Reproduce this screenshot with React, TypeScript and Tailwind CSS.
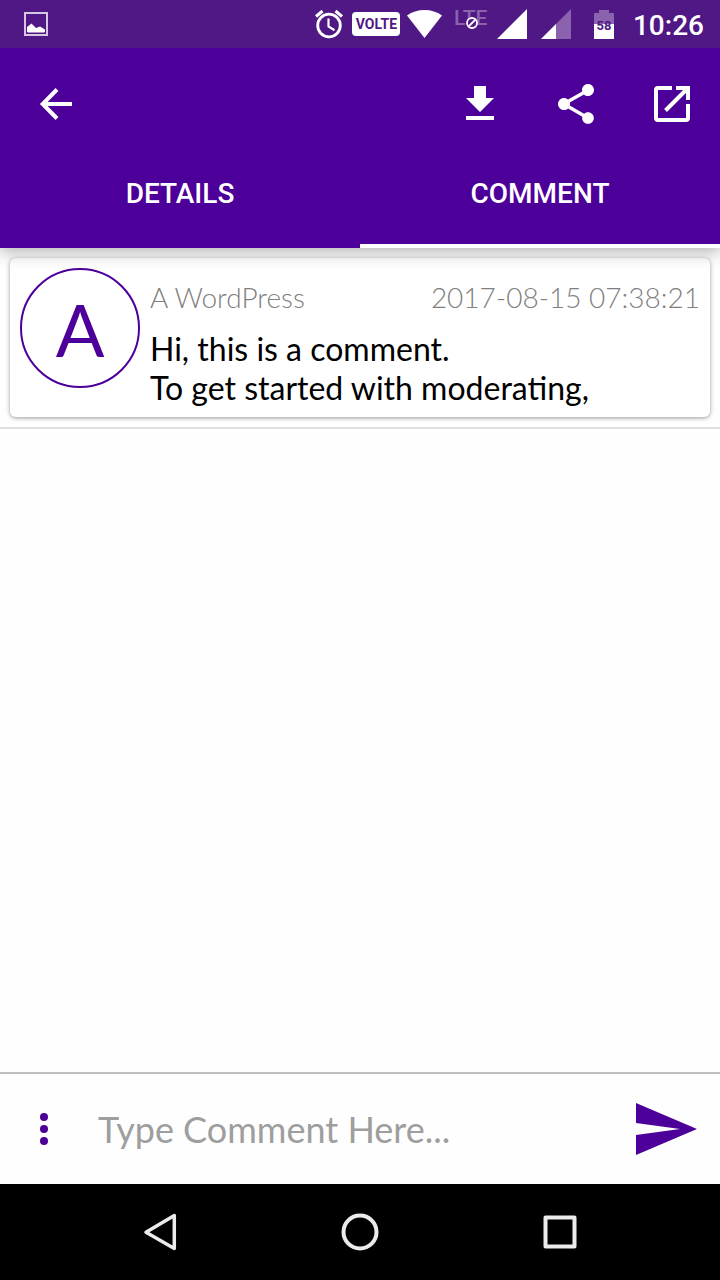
import { useState } from "react";

function StatusBar() {
  return (
    <div className="flex h-12 items-center justify-between bg-[#501884] pr-4 pl-6 text-white">
      <svg className="size-6" viewBox="0 0 24 24" aria-hidden="true">
        <rect x="1" y="1" width="22" height="22" fill="none" stroke="#d6c8e4" strokeWidth="2" />
        <path d="M3 20V15l4.500-3.500 4.500 4.500 4-1.500 5 3v2.500l-1 .5H4z" fill="#fff" />
      </svg>
      <div className="flex items-center">
        <svg className="h-8 w-7" viewBox="0 0 28 32" fill="none" stroke="#fff" aria-hidden="true">
          <circle cx="14" cy="17.500" r="11.300" strokeWidth="2.800" />
          <path d="M1 8.500 7.500 3M27 8.500 20.500 3" strokeWidth="3" />
          <path d="M13.500 10.500v8l6 3.700" strokeWidth="2.200" />
        </svg>
        <span className="ml-[9px] flex h-6 w-12 items-center justify-center rounded-sm bg-white pl-px font-['Roboto',sans-serif] text-[14px] font-bold text-[#501884]">
          VOLTE
        </span>
        <svg className="ml-[7px] h-7 w-[35px]" viewBox="0 0 35 28" fill="#fff" aria-hidden="true">
          <path d="M17.500 28 0 5.500Q7.500 0 17.500 0T35 5.500z" />
        </svg>
        <span className="relative ml-3 flex h-10 w-9 items-start font-['Roboto',sans-serif] text-[21px] leading-[28px] font-medium text-[#8a62ad]">
          LTE
          <svg className="absolute top-[13px] left-3 size-3" viewBox="0 0 12 12" fill="#501884" stroke="#fff" strokeWidth="1.800" aria-hidden="true">
            <circle cx="6" cy="6" r="5" />
            <path d="m3 9 6-6" />
          </svg>
        </span>
        <svg className="ml-[7px] size-[30px]" viewBox="0 0 30 30" fill="#fff" aria-hidden="true">
          <path d="M30 0v30H0z" />
        </svg>
        <svg className="ml-[14px] size-[30px]" viewBox="0 0 30 30" aria-hidden="true">
          <path d="M30 0v30H0z" fill="#8a62ad" />
          <path d="M15 15v15H0z" fill="#fff" />
        </svg>
        <svg className="ml-[23px] h-[29px] w-5" viewBox="0 0 20 29" aria-hidden="true">
          <path d="M0 3h5V0h10v3h5v11H0z" fill="#8a62ad" />
          <path d="M0 14h20v15H0z" fill="#fff" />
          <text x="10" y="20" textAnchor="middle" className="font-['Roboto',sans-serif] text-[13px] font-bold" fill="#501884">58</text>
        </svg>
        <time className="ml-[19px] pt-[3px] font-['Roboto',sans-serif] text-[28px] leading-9 font-medium">10:26</time>
      </div>
    </div>
  );
}

function Toolbar() {
  return (
    <div className="flex h-28 items-center px-6 pl-8 text-white">
      <button type="button" aria-label="Back">
        <svg className="size-12" viewBox="0 0 48 48" fill="none" stroke="currentColor" strokeWidth="4">
          <path d="M40 24H12" />
          <path d="M25 9.500 10.700 24 25 38.500" />
        </svg>
      </button>
      <div className="ml-auto flex gap-12">
        <button type="button" aria-label="Download">
          <svg className="size-12" viewBox="0 0 24 24" fill="currentColor">
            <path d="M19 9h-4V3H9v6H5l7 7 7-7zM5 18v2h14v-2H5z" />
          </svg>
        </button>
        <button type="button" aria-label="Share">
          <svg className="size-12" viewBox="0 0 24 24" fill="currentColor">
            <path d="M18 16.080c-.76 0-1.440.3-1.960.77L8.910 12.700c.05-.23.09-.46.09-.7s-.04-.47-.09-.7l7.050-4.110c.54.5 1.250.81 2.040.81 1.660 0 3-1.340 3-3s-1.340-3-3-3-3 1.340-3 3c0 .24.04.47.09.7L8.040 9.810C7.500 9.310 6.790 9 6 9c-1.660 0-3 1.340-3 3s1.340 3 3 3c.79 0 1.500-.31 2.040-.81l7.120 4.160c-.05.21-.08.43-.08.65 0 1.610 1.310 2.920 2.920 2.920s2.920-1.310 2.920-2.920-1.310-2.920-2.920-2.920z" />
          </svg>
        </button>
        <button type="button" aria-label="Open in new window">
          <svg className="size-12" viewBox="0 0 48 48" fill="none" stroke="currentColor" strokeWidth="4">
            <path d="M24 8H10a2 2 0 0 0-2 2v28a2 2 0 0 0 2 2h28a2 2 0 0 0 2-2V24" />
            <path d="M28 8h12v12M39 9 17.500 30.500" />
          </svg>
        </button>
      </div>
    </div>
  );
}

const tabs = ["DETAILS", "COMMENT"];

function Tabs() {
  const [active, setActive] = useState("COMMENT");
  return (
    <div role="tablist" className="grid h-[88px] grid-cols-2">
      {tabs.map((tab) => (
        <button
          key={tab}
          type="button"
          role="tab"
          aria-selected={tab === active}
          onClick={() => setActive(tab)}
          className={`border-b-4 pb-4 font-['Roboto',sans-serif] text-[28px] font-medium text-white ${
            tab === active ? "border-white" : "border-transparent"
          }`}
        >
          {tab}
        </button>
      ))}
    </div>
  );
}

function CommentCard() {
  return (
    <li className="border-b-2 border-[#e0e0e0] p-[10px]">
      <article className="flex gap-[10px] rounded-md bg-white p-[10px] shadow-[0_1px_4px_rgba(0,0,0,0.4)]">
        <div className="flex size-[120px] shrink-0 items-center justify-center rounded-full border-2 border-[#4d0099] pt-0.5 text-[72px] text-[#4d0099]">
          A
        </div>
        <div className="min-w-0 flex-1 pt-[11px]">
          <header className="flex justify-between text-[28px] leading-9 font-light text-[#808080]">
            <span>A WordPress</span>
            <time>2017-08-15 07:38:21</time>
          </header>
          <p className="mt-[14px] text-[32px] leading-[39px] text-black">
            Hi, this is a comment.
            <br />
            To get started with moderating,
          </p>
        </div>
      </article>
    </li>
  );
}

function Composer() {
  return (
    <form className="flex h-28 items-center border-t-2 border-[#bfbfbf] pr-5 pl-5" onSubmit={(e) => e.preventDefault()}>
      <button type="button" aria-label="More options" className="text-[#4d0099]">
        <svg className="size-12" viewBox="0 0 48 48" fill="currentColor">
          <circle cx="24" cy="12" r="4" />
          <circle cx="24" cy="24" r="4" />
          <circle cx="24" cy="36" r="4" />
        </svg>
      </button>
      <input
        type="text"
        aria-label="Comment"
        placeholder="Type Comment Here..."
        className="ml-[30px] min-w-0 flex-1 bg-transparent text-[36px] text-black outline-none placeholder:text-[#9e9e9e]"
      />
      <button type="submit" aria-label="Send" className="text-[#4d0099]">
        <svg className="h-[52px] w-16" viewBox="0 0 64 52" fill="currentColor">
          <path d="M0 0 61 26 0 52V32l44-6L0 20z" />
        </svg>
      </button>
    </form>
  );
}

function NavigationBar() {
  return (
    <nav className="flex h-24 items-center justify-center gap-[152px] bg-black text-[#ebebeb]">
      <button type="button" aria-label="Back">
        <svg className="size-12" viewBox="0 0 48 48" fill="none" stroke="currentColor" strokeWidth="3.500" strokeLinejoin="round">
          <path d="M38.300 7.500v33L10 24.300z" />
        </svg>
      </button>
      <button type="button" aria-label="Home">
        <svg className="size-12" viewBox="0 0 48 48" fill="none" stroke="currentColor" strokeWidth="4">
          <circle cx="24" cy="24" r="16.500" />
        </svg>
      </button>
      <button type="button" aria-label="Recent apps">
        <svg className="size-12" viewBox="0 0 48 48" fill="none" stroke="currentColor" strokeWidth="4" strokeLinejoin="round">
          <rect x="9.500" y="9.500" width="29" height="29" />
        </svg>
      </button>
    </nav>
  );
}

export default function App() {
  return (
    <div className="flex min-h-screen flex-col bg-[#fefefe] font-['Lato',sans-serif]">
      <header className="relative z-10 bg-[#4d0099] shadow-[0_4px_16px_rgba(0,0,0,0.3)]">
        <StatusBar />
        <Toolbar />
        <Tabs />
      </header>
      <main className="flex-1">
        <ul>
          <CommentCard />
        </ul>
      </main>
      <Composer />
      <NavigationBar />
    </div>
  );
}
